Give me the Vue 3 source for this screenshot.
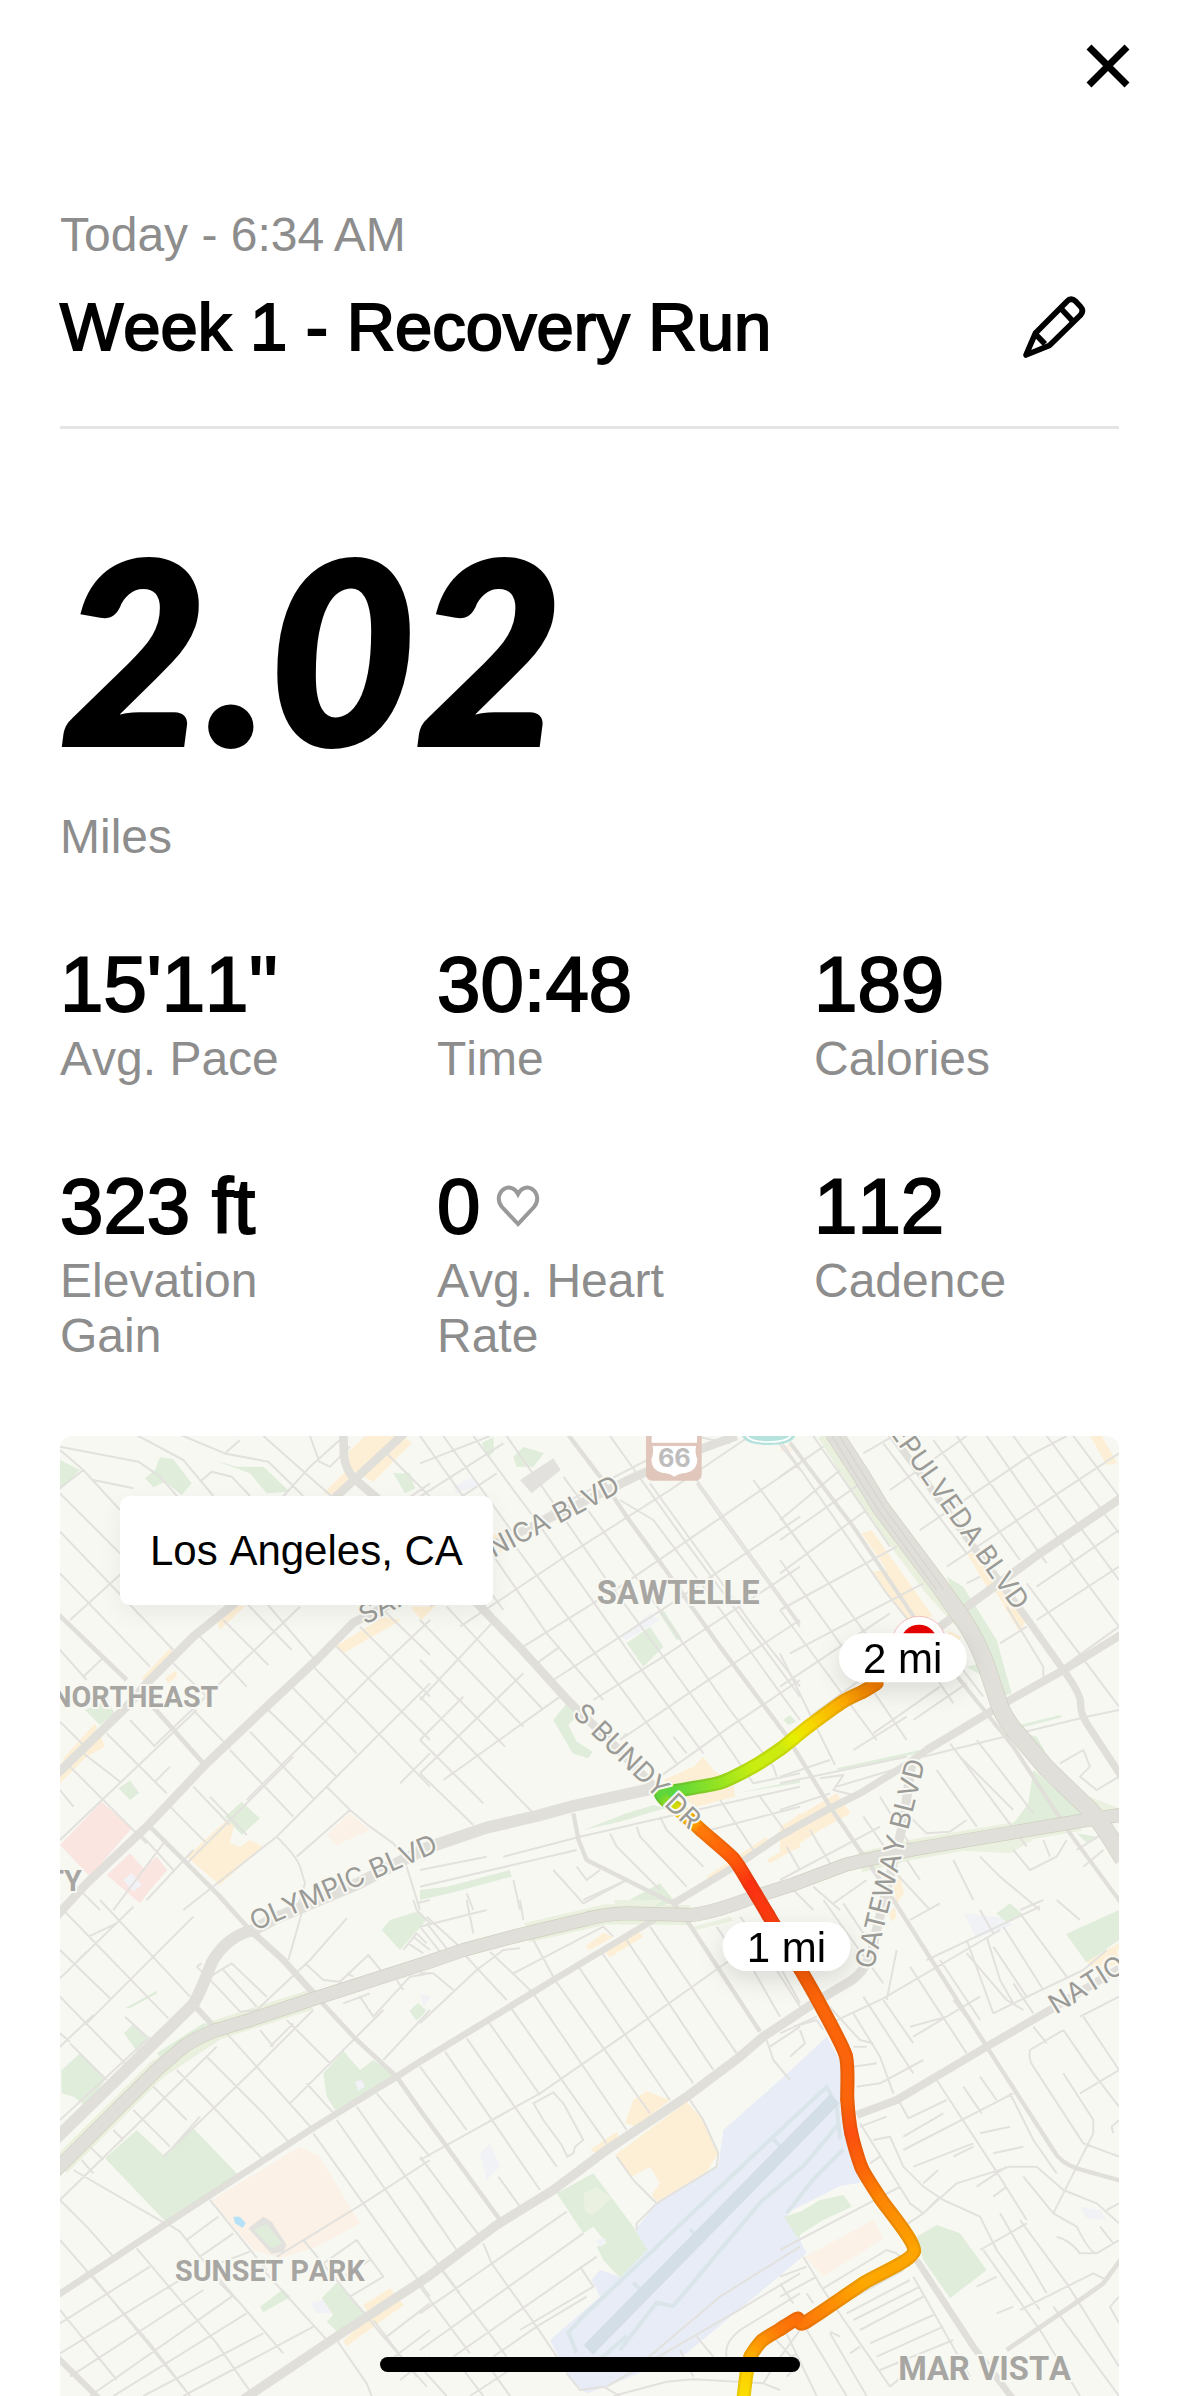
<template>
  <main class="activity">
    <header class="top-bar">
      <button class="icon-btn" type="button" aria-label="Close">
        <svg class="close-icon" viewBox="0 0 44 44">
          <path d="M3 3L41 41M41 3L3 41" />
        </svg>
      </button>
    </header>

    <section class="heading">
      <p class="label">Today - 6:34&thinsp;AM</p>
      <div class="title-row">
        <h1>Week 1 - Recovery Run</h1>
        <button class="icon-btn" type="button" aria-label="Edit title">
          <svg class="pencil-icon" viewBox="0 0 186 186">
            <path d="M9 177L37 112L131 17Q144 3 158 16L172 31Q184 44 172 58L80 148Z" />
            <path d="M114 38L149 75M37 114L66 144" />
          </svg>
        </button>
      </div>
    </section>

    <section class="distance">
      <p class="distance-value">2.02</p>
      <p class="label">Miles</p>
    </section>

    <dl class="metrics">
      <div v-for="metric in metrics" :key="metric.label" class="metric">
        <dd>
          {{ metric.value }}
          <svg v-if="metric.heart" class="heart-icon" viewBox="0 0 44 42">
            <path d="M22 39L6 22C1 16 2 8 8 4C13 1 19 3 22 9C25 3 31 1 36 4C42 8 43 16 38 22Z" />
          </svg>
        </dd>
        <dt class="label">{{ metric.label }}</dt>
      </div>
    </dl>

    <section class="map">
      <!-- three map units per pixel -->
      <svg class="map-canvas" viewBox="0 0 3177 2880" role="img" aria-label="Route map">
        <defs>
          <linearGradient
            v-for="(seg, index) in segments"
            :id="'seg' + index"
            :key="index"
            gradientUnits="userSpaceOnUse"
            :x1="seg.x1"
            :y1="seg.y1"
            :x2="seg.x2"
            :y2="seg.y2"
          >
            <stop offset="0" :stop-color="seg.from" />
            <stop offset="1" :stop-color="seg.to" />
          </linearGradient>
        </defs>

        <!-- parks, schools, shops and the airport -->
        <polygon class="airport" points="2160,1932 1990,2082 1975,2192 1790,2302 1725,2382 1760,2442 1680,2522 1620,2502 1595,2532 1620,2582 1550,2642 1470,2712 1530,2832 1580,2872 1640,2852 1880,2752 2240,2452 2180,2332 2340,2250 2400,2240 2390,2092 2350,1892 2300,1802" />
        <path class="taxiway" d="M1550 2750L1525 2690 1570 2640 2140 2102 2300 1952 2330 2010 2340 2110M1680 2742L1790 2600 1840 2610 2100 2300 2230 2190 2340 2060M1720 2540L1760 2580M1890 2380L1930 2420M2140 2110L2180 2150M1620 2770L1700 2700M2180 2332L2260 2230 2350 2140" />
        <path class="runway" d="M1585 2742L2325 1988" />
        <path class="verge" d="M0 2190L290 1902 470 1782 750 1692M2300 -10L2440 212 2620 452 2710 552M2400 1280L2560 1240 3060 1155M1400 1490L1640 1435 1890 1437" />
        <g v-for="tile in tiles" :key="tile.id" :transform="`translate(${tile.x} ${tile.y})`">
          <path v-for="kind in Object.keys(tile.areas)" :key="kind" :class="kind" :d="tile.areas[kind]" />
        </g>

        <!-- side streets -->
        <g v-for="tile in tiles" :key="tile.id" :transform="`translate(${tile.x} ${tile.y})`">
          <path class="street" :d="tile.streets" />
        </g>

        <path v-for="(road, index) in roads" :key="index" class="road" :stroke-width="road.width" :d="road.d" />
        <path class="freeway-edge" stroke-width="42" :d="santaMonicaFwy" />
        <path class="freeway-edge" stroke-width="54" :d="sanDiegoFwy" />
        <path class="road" stroke-width="38" :d="santaMonicaFwy" />
        <path class="road" stroke-width="50" :d="sanDiegoFwy" />
        <path class="median" d="M2332 -10L2400 100 2470 212 2650 460M2310 -10L2390 120 2455 222 2630 462" />

        <!-- highway shields -->
        <rect x="1758" y="-30" width="167" height="164" rx="18" fill="#e1c6bb" />
        <path d="M1775 0Q1800 -4 1843 -30Q1886 -4 1911 0V20H1775Z" fill="#fff" />
        <path d="M1778 30H1908Q1904 50 1912 70Q1912 104 1880 110Q1856 112 1843 122Q1830 112 1806 110Q1774 104 1774 70Q1782 50 1778 30Z" fill="#fff" />
        <text class="shield" x="1843" y="92" text-anchor="middle">66</text>
        <path d="M2045 -10Q2045 27 2126 27Q2207 27 2207 -10Z" fill="#b5e2dc" />
        <path d="M2056 -10Q2060 18 2126 18Q2192 18 2196 -10" fill="none" stroke="#fff" stroke-width="5" />

        <!-- route, coloured by pace -->
        <circle cx="2577" cy="622" r="81" fill="#fff" stroke="#f2a5a5" stroke-width="2" />
        <circle cx="2577" cy="622" r="56" fill="#e90000" />
        <path v-for="(seg, index) in segments" :key="'o' + index" class="route-outer" :stroke="`url(#seg${index})`" :d="seg.d" />
        <path class="route-shade" :d="routePath" />
        <path v-for="(seg, index) in segments" :key="'i' + index" class="route-inner" :stroke="`url(#seg${index})`" :d="seg.d" />

        <text
          v-for="name in streetNames"
          :key="name.text"
          class="street-name"
          :text-anchor="name.anchor"
          :transform="`translate(${name.x} ${name.y}) rotate(${name.angle})`"
        >{{ name.text }}</text>
        <text
          v-for="place in places"
          :key="place.text"
          class="place"
          :class="{ large: place.large }"
          :x="place.x"
          :y="place.y"
          :text-anchor="place.anchor"
        >{{ place.text }}</text>

        <g v-for="mile in miles" :key="mile.text" class="mile">
          <rect :x="mile.x" :y="mile.y" width="383" height="147" rx="73" />
          <text :x="mile.x + 191" :y="mile.y + 119" text-anchor="middle">{{ mile.text }}</text>
        </g>
      </svg>
      <p class="location">Los Angeles, CA</p>
    </section>

    <div class="home-indicator"></div>
  </main>
</template>

<script setup>
const metrics = [
  { value: "15'11''", label: 'Avg. Pace' },
  { value: '30:48', label: 'Time' },
  { value: '189', label: 'Calories' },
  { value: '323 ft', label: 'Elevation Gain' },
  { value: '0', label: 'Avg. Heart Rate', heart: true },
  { value: '112', label: 'Cadence' }
];

const miles = [
  { text: '2 mi', x: 2337, y: 592 },
  { text: '1 mi', x: 1988, y: 1458 }
];

const streetNames = [
  { text: 'SANTA MONICA BLVD', x: 915, y: 567, angle: -27.5, anchor: 'start' },
  { text: 'OLYMPIC BLVD', x: 584, y: 1486, angle: -23.5, anchor: 'start' },
  { text: 'S BUNDY DR', x: 1535, y: 836, angle: 44.5, anchor: 'start' },
  { text: 'SEPULVEDA BLVD', x: 2865, y: 527, angle: 55, anchor: 'end' },
  { text: 'GATEWAY BLVD', x: 2440, y: 1602, angle: -76, anchor: 'start' },
  { text: 'NATIONAL BLVD', x: 2988, y: 1736, angle: -32, anchor: 'start' }
];

const places = [
  { text: 'NORTHEAST', x: 475, y: 814, anchor: 'end' },
  { text: 'CITY', x: 65, y: 1365, anchor: 'end' },
  { text: 'SUNSET PARK', x: 345, y: 2535, anchor: 'start' },
  { text: 'SAWTELLE', x: 1610, y: 504, anchor: 'start', large: true },
  { text: 'MAR VISTA', x: 2515, y: 2832, anchor: 'start', large: true }
];

// [x, y, pace colour]
const route = [
  [2450, 742, '#f57c00'],
  [2410, 766, '#f58a00'],
  [2350, 796, '#fba800'],
  [2250, 868, '#f6d800'],
  [2200, 908, '#e6ee00'],
  [2160, 940, '#cdea10'],
  [2080, 992, '#c8ee10'],
  [1980, 1040, '#98e420'],
  [1840, 1066, '#5cd63c'],
  [1804, 1076, '#5cd63c'],
  [1830, 1104, '#a8dc10'],
  [1862, 1126, '#ffd800'],
  [1925, 1184, '#ff7a08'],
  [2020, 1268, '#ff5a0a'],
  [2070, 1346, '#fb3012'],
  [2124, 1436, '#fb3a10'],
  [2222, 1602, '#fa5c08'],
  [2272, 1690, '#fb6408'],
  [2357, 1858, '#fb640a'],
  [2362, 1992, '#fb640a'],
  [2374, 2092, '#fc5010'],
  [2405, 2196, '#fc6408'],
  [2460, 2286, '#fd8404'],
  [2562, 2446, '#fda400'],
  [2410, 2542, '#fda800'],
  [2234, 2660, '#fc7808'],
  [2212, 2648, '#fc6e08'],
  [2160, 2680, '#fc7808'],
  [2106, 2714, '#fd9204'],
  [2072, 2760, '#fdac00'],
  [2060, 2810, '#fcd000'],
  [2050, 2890, '#fbe000']
];

// curve between two route points, bent towards their neighbours
function curveTo(index) {
  const a = route[index];
  const b = route[index + 1];
  const before = route[index - 1] || a;
  const after = route[index + 2] || b;
  return `C${a[0] + (b[0] - before[0]) / 9} ${a[1] + (b[1] - before[1]) / 9} ` +
    `${b[0] - (after[0] - a[0]) / 9} ${b[1] - (after[1] - a[1]) / 9} ${b[0]} ${b[1]}`;
}

const segments = route.slice(1).map((point, index) => {
  const prev = route[index];
  return {
    x1: prev[0],
    y1: prev[1],
    x2: point[0],
    y2: point[1],
    from: prev[2],
    to: point[2],
    d: `M${prev[0]} ${prev[1]}` + curveTo(index)
  };
});

const routePath = `M${route[0][0]} ${route[0][1]}` + segments.map((seg, index) => curveTo(index)).join('');

const santaMonicaFwy = 'M-20 2210L290 1902 370 1832Q410 1805 470 1782L570 1752 750 1692 1100 1580 1210 1542 1360 1502 1560 1454Q1640 1432 1700 1432L1890 1437Q1950 1434 2090 1380L2200 1345 2360 1285 2560 1240 3060 1155 3200 1134';
const sanDiegoFwy = 'M2320 -10L2400 112 2460 212 2640 452 2710 552Q2750 610 2780 692L2820 812Q2840 860 2880 902L2960 997 3090 1122Q3130 1165 3190 1270';

const roads = [
  { width: 26, d: 'M-10 1440L80 1342 260 1172 440 982 620 812 770 672 880 560 1000 500 1280 335 1410 275 1730 120 1920 40 2030 0' },
  { width: 26, d: 'M-10 1015L200 812 260 742 400 602 520 505 830 180 890 125 1040 -15' },
  { width: 26, d: 'M850 -10L852 60Q858 105 885 130L955 190 1240 490 1380 635 1530 800 1640 905 1800 1070 1930 1190' },
  { width: 36, d: 'M-20 2115L150 1950 400 1705Q425 1660 455 1580 500 1500 580 1482L640 1450 900 1340 1100 1236 1280 1175 1430 1140 1540 1110 1790 1055' },
  { width: 22, d: 'M2490 -10L2740 332 2890 532 3010 702Q3060 770 3062 800 3060 830 3080 862L3190 1030' },
  { width: 26, d: 'M2640 572L2710 520 2940 352 3190 182' },
  { width: 24, d: 'M3190 592L3020 697 2850 792 2800 822 2600 942' },
  { width: 22, d: 'M2600 942L2530 992 2400 1072 2300 1122 2160 1200 2040 1282 1840 1402' },
  { width: 20, d: 'M1800 1440L1480 1632 1080 1877 1010 1922 750 2082 320 2362 -10 2580' },
  { width: 28, d: 'M550 2890L830 2702 1100 2525 1310 2367 1480 2262 1640 2142 1880 1982 2040 1862 2110 1802 2260 1702 2360 1642Q2430 1605 2445 1500L2530 1160 2555 980' },
  { width: 24, d: 'M2390 2037L2510 1992 2780 1832 2970 1722 3190 1590' },
  { width: 14, d: 'M-10 530L200 732M270 802L430 982M270 1172L480 1382 570 1482' },
  { width: 20, d: 'M570 1482L670 1572 760 1672' },
  { width: 14, d: 'M760 1672L880 1802 1010 1922 1080 2022 1320 2352' },
  { width: 13, d: 'M1520 -10L1620 122 1700 242 1810 392 1980 632 2180 900 2310 1112 2480 1360 2780 1832 2980 2142Q3000 2180 3050 2197L3190 2236' },
  { width: 12, d: 'M2190 20L2380 272 2580 570 2700 732 2860 932 3030 1192 3190 1410' },
  { width: 13, d: 'M1540 1132L1555 1210 1580 1272 1840 1402 1880 1452 2100 1787' },
  { width: 20, d: 'M2570 2472L2740 2732 2860 2890' },
  { width: 14, d: 'M3190 2460L3130 2542 3060 2592 2840 2742' },
  { width: 18, d: 'M-10 2762L120 2890M400 1705L460 1770' }
];

// streets and land use, one entry per map tile
const tiles = [
  {
    id: 'nw', x: -30, y: -48,
    areas: {
      green: 'M30 120L90 150 30 210ZM285 175L315 150 330 112 370 118 425 190 395 225 345 185 310 202ZM490 120L560 140 640 140 720 215 650 220 600 160ZM1030 160L1080 160 1095 205 1065 220ZM105 870L170 840 195 880 150 915ZM205 1105L240 1082 268 1118 240 1140ZM525 1190L575 1145 630 1195 575 1245Z',
      shops: 'M820 220L900 140 895 95 945 48 1060 48 1085 70 970 185 940 170 865 225ZM275 775L360 685 372 700 300 790ZM345 775L380 750 380 770 355 790ZM495 590L545 555 585 558 510 630ZM855 680L1000 590 1055 600 880 700ZM1080 560L1140 560 1110 595ZM40 1015L135 910 165 980 110 1010 30 1090 30 1060ZM410 1310L530 1200 552 1218 540 1270 570 1280 600 1260 638 1280 510 1395 480 1370Z',
      hospital: 'M30 1275L155 1145 245 1225 120 1370ZM170 1365L240 1300 280 1345 320 1310 352 1350 300 1410 270 1450Z',
      school: 'M830 1245L900 1180 960 1230 860 1275Z',
      block: 'M220 1380L245 1360 275 1395 250 1415Z'
    },
    streets: 'M30 80L265 125 330 170 470 330M130 180L250 205M30 205L100 150 30 90M100 150L210 270M250 40L400 120 490 228M380 40L525 100 570 60M520 100L655 125 760 228M450 185L485 155 545 170 600 228M640 48L880 260M780 48L808 125 840 140 900 80M30 335L370 690M30 220L210 400M30 460L300 740M30 690L110 780M60 600L215 460M100 770L155 718M1000 90L1140 230M690 240L780 140 880 50M920 340L1140 190M450 650L590 800M520 600L655 735M590 550L725 690M650 550L795 720M430 870L540 985M370 730L485 845M310 980L750 560M540 990L730 1190M600 935L790 1135M655 870L860 1070M725 800L920 1000M790 740L1140 1100M860 680L1140 960M930 620L1140 830M1000 570L1140 705M410 1330L730 1010M590 1140L960 770 1140 600M680 1250L1140 790M740 1310L900 1170M1050 1090L1140 1000M170 940L350 1120M100 1000L210 1085M60 1040L290 1270M240 900L315 980M30 1260L440 870M315 1085L360 1040M360 1160L470 1270M430 1100L540 1215M270 1240L370 1350M30 1110L70 1160M190 1470L340 1270M290 1440L430 1290M400 1470L680 1250M480 1130L590 1245M680 1250Q740 1310 750 1340L765 1390 740 1470M830 1100L900 1170 960 1220 1030 1270 1060 1310M30 905L100 975M100 1420L150 1470M1070 1340L1110 1470M1100 1450L1140 1440'
  },
  {
    id: 'n', x: 1080, y: -48,
    areas: {
      green: 'M280 110L310 80 372 100 340 140 290 140ZM185 70L220 50 222 95 205 110ZM620 670L690 620 730 680 670 740ZM715 575L730 570 785 655 770 660ZM400 900L440 850 480 880 445 915 470 965 518 995 505 1015 458 1000ZM1090 900L1110 885 1128 905 1105 915ZM490 1230L620 1180 700 1155 735 1165 600 1205ZM0 1410L80 1400 270 1350 275 1370 90 1420 0 1440ZM590 1460L720 1390 765 1445 700 1465ZM950 1120L1140 1080 1140 1088Z',
      grey: 'M300 180L400 115 422 150 335 220Z',
      shops: 'M215 350L260 320 270 365 240 400ZM0 560L45 560 0 605ZM730 1080L820 1040 850 1010 880 1050 940 1090 945 1130 830 1160 760 1120ZM858 1370L1040 1250 1045 1270 870 1380ZM1040 1320L1140 1260 1140 1280 1050 1330ZM1080 1230L1140 1180 1140 1200Z',
      school: 'M1080 90L1110 80 1120 95Z',
      block: 'M600 650L690 580 720 600 620 660ZM100 200L160 170 180 195 110 220Z'
    },
    streets: 'M0 230L250 70M110 240L230 160M0 130L210 48M180 400L470 230 820 48M120 620L420 420 750 210 990 48M310 680L600 500 1140 130M350 730L420 680M400 780L740 560 1140 290M520 840L730 710 1140 440M600 960L850 790 1140 600M720 1070L930 920 1140 780M30 560L110 520M200 500L250 570M215 400L380 640 550 840M250 330L420 560 600 800 770 1030M0 48L130 230M70 48L280 340M160 48L340 290 650 730 850 1000M260 48L380 220 560 480 730 710 890 930 1000 1090M430 170L540 320 740 600 930 870 1060 1040 1070 1070M600 240L700 300 880 540 1060 790 1140 900M570 48L800 370 1140 830M690 190L1000 620 1140 800M740 48L830 180 1140 610M820 48L930 70M830 190L900 290 1140 620M1000 180L1140 370M1060 48L1140 150M0 600L310 920M0 720L255 980M0 830L350 1190M0 960L190 1150M0 1060L160 1215M80 560L370 870M0 840L215 610M0 1060L310 760M70 1080L420 830M0 960L130 830M250 1310L480 1250 740 1190M0 1400L470 1290M0 1350L200 1310M140 1420L160 1470M280 1380L300 1470M400 1350L490 1450M470 1340L500 1380 540 1350M570 1240L590 1280 720 1410M650 1220L660 1250 800 1400M720 1190L740 1230 850 1340M1000 1090L1140 1060M740 1190L1140 1100M900 1140L1000 1290M1020 1130L1100 1240M870 1230L1140 1160M490 1450L620 1380M760 950L800 1000M600 960L620 940'
  },
  {
    id: 'ne', x: 2160, y: -48,
    areas: {
      green: 'M500 470L550 500 650 660 695 820 660 830 600 700ZM560 740L620 725 645 790ZM760 1050L830 1110 910 1185 690 1225 745 1150ZM720 935L770 950 795 995 760 980ZM170 1045L420 990 420 998 180 1052ZM720 915L840 885 845 892 730 922ZM890 1240L950 1250 920 1268Z',
      pale: 'M500 1290L680 1210 760 1260 690 1300ZM930 1130L1017 1165 1017 1180 930 1180Z',
      shops: 'M245 340L275 330 460 590 380 600 270 455 320 450ZM560 400L600 400 740 600 720 640 650 520 620 500ZM930 48L965 48 1012 130 980 135ZM0 1220L170 1120 212 1180 120 1230 0 1310ZM340 1400L360 1365 372 1420 350 1450ZM500 630L545 650 520 680Z',
      school: 'M0 80L30 75 30 90 0 96Z'
    },
    streets: 'M0 170L130 80M0 300L180 150M0 360L270 170M0 460L260 270M0 570L350 380M30 700L430 490M0 800L330 580M90 890L240 780M220 990L380 890M280 940L480 800M400 900L560 790M250 100L340 48M330 210L560 48M420 330L760 100 860 48M500 440L1017 100M560 490L600 470M770 500L1017 330M660 670L740 620M770 600L1017 440M850 740L1017 620M0 60L320 520 400 620M0 290L300 700M0 420L230 740 380 960M0 570L290 960M0 700L165 1035M100 48L330 380M380 640L520 850M450 620L610 830M310 70L560 400M460 60L720 420M530 48L800 430M620 48L880 420M700 48L980 430 1017 480M800 48L1017 340M880 48L1017 230M740 490L1017 860M870 420L1017 620M680 560L790 740 790 770M430 1010L920 890 1017 870M0 1090L380 1010M0 1070L150 1020M170 1100L370 1040M120 1075L190 1065 160 1110 240 1130M510 970L740 1280M590 960L760 1180M470 1050L590 1220M540 1010L700 1170M360 1160L440 1240 510 1235 560 1200M0 1170L150 1120M0 1380L300 1220M20 1280L60 1350M90 1230L150 1330M250 1190L320 1290M300 1130L400 1290M840 1030L910 990 930 1040 900 1070 950 1110 1017 1070M700 1290L750 1350 830 1310M790 1260L810 1310M860 1260L830 1310M600 1310L660 1370 780 1470M520 1320L580 1440M330 1340L450 1470M380 1320L420 1380M890 1290L970 1240M910 1340L970 1290M30 1400L100 1470M100 1400L180 1470M160 1450L260 1380M720 1470L790 1440'
  },
  {
    id: 'sw', x: -30, y: 1392,
    areas: {
      green: 'M165 775L260 690 340 765 430 685 565 825 350 968ZM35 510L90 460 165 540 110 620 70 590 35 580ZM222 400L250 372 295 410 262 455ZM225 325L320 272 322 280 240 325ZM995 90L1020 60 1100 35 1130 60 1050 150ZM1078 332L1105 308 1127 335 1100 362ZM820 520L880 453 930 510 970 480 1032 525 860 637 830 590ZM815 1195L860 1148 950 1240 870 1303 830 1265 850 1245ZM630 1220L700 1168 722 1190 640 1237ZM320 460L460 370 500 375 340 480Z',
      school: 'M485 900L750 740 810 770 930 970 800 1040 690 1075 610 1050Z',
      shops: 'M940 1215L1020 1165 1062 1215 890 1338 880 1322 960 1250Z',
      grey: 'M595 985L640 950 665 965 710 1035 700 1055 665 1062Z',
      field: 'M612 990L650 972 695 1030 665 1045Z',
      pool: 'M550 950L570 950 587 970 578 984 555 970Z',
      block: 'M915 545L935 540 945 560 925 572ZM780 1210L820 1200 845 1240 800 1240Z'
    },
    streets: 'M40 30L355 355M30 150L180 295M150 0L420 290M30 235L250 20M75 190L110 155M115 110L200 70M110 370L430 50M30 440L130 345M30 290L240 505M225 350L290 410M60 430L170 540M30 400L60 425M30 660L300 410M440 200L500 260 570 335M440 200L455 190M480 230L545 190 650 290M520 210L620 320M570 335L620 330 780 180 890 55M715 180L755 40M765 190L820 240 870 245 955 165 1000 220M890 220L910 230M1060 150L1100 100 1130 130M1075 130L1120 160M1090 110L1140 150M250 630L360 740M310 560L410 660M380 510L470 600 640 780M470 470L640 640 720 730M530 400L620 500 790 690M710 360L840 490M630 390L670 440M30 900L500 440M340 770L620 500 790 330M370 740L450 650M720 610L1000 330M1000 480L1140 330M660 440L730 370M880 310L960 280M930 290L970 350 1080 230 1140 220M1040 240L1060 270M70 810L345 970M95 780L130 820M30 900L110 980 190 1070M190 690L220 720M120 740L160 780M30 1020L300 1330 420 1488M130 1130L420 1488M260 1045L500 1330 610 1488M350 970L390 995 450 1070 700 1360M500 1140L560 1200M640 1110L840 1330M30 1230L200 1440M760 1020L1000 1310 1130 1460M860 1320L950 1450 965 1488M480 900L650 1110M410 1020L505 950M450 1070L550 1000M480 1100L600 1055M30 1270L300 1100M30 1360L390 1140M60 1430L460 1170M120 1488L545 1190M190 1488L590 1240M280 1488L640 1300M400 1488L790 1280M680 1070L940 910 1140 780M790 700L940 910 1140 1190M860 660L1140 1060M920 620L1060 820 1140 930M980 580L1140 770M820 1090L920 1020 1000 1130 900 1190M880 1130L960 1080M770 550L860 650M1010 1310L1140 1210M1020 1380L1140 1290M1050 1440L1140 1370M970 1260L1100 1430M1090 0L1100 30 1140 70'
  },
  {
    id: 's', x: 1080, y: 1392,
    areas: {
      shops: 'M585 765L800 605 850 660 895 760 860 815 710 905 695 885 720 850 690 800 635 830ZM615 670L640 600 680 573 750 600 650 680ZM510 750L590 695 602 720 530 760ZM495 140L550 98 580 110 510 150ZM550 150L655 95 670 110 570 172Z',
      green: 'M410 880L520 820 580 900 640 980 682 1050 600 1133 550 1080 530 1040 560 1030 520 980 490 1000ZM1092 950L1140 935 1140 1020ZM0 315L18 330 0 350Z',
      pale: 'M490 880L530 860 575 895 520 945 495 935ZM580 0L730 0 700 20 590 20ZM820 80L930 50 940 62 830 90Z',
      block: 'M180 760L210 730 240 800 200 840ZM0 280L35 290 10 320ZM525 1020L560 1015 545 1040Z'
    },
    streets: 'M0 500L140 690M75 455L360 870M140 415L410 800M205 365L360 585M270 320L560 730M340 280L620 690M405 240L690 640M475 200L750 600M540 150L820 550M620 120L880 510M690 80L950 460M0 780L360 580 620 400 930 180M340 610L400 577 430 610 490 720 465 740 460 760 442 770 425 735 370 660ZM235 830L300 920M0 890L110 1050M0 770L180 1010M0 370L170 210 250 150 300 145M130 160L260 300M210 155L340 280M280 220L550 80 580 110M340 120L400 230M0 220L40 220 100 270M0 80L200 30M20 50L130 150M0 80L60 155M20 70L80 145M140 0L160 100M300 0L310 60M190 1030L215 1090 350 1280 430 1400M0 1240L440 935M0 1350L490 1000M100 1370L530 1070M480 1100L520 1160 300 1290M50 1090L260 1370M0 1160L150 1360M350 1280L500 1190M0 1020L120 1180M220 1370L350 1280M440 1420L480 1470 550 1460 600 1488M560 1460L940 1240 1140 1120M640 1410L900 1190 1140 1040M780 1350L820 1430M830 1310L880 1370M920 1370Q910 1330 960 1290L1140 1180M580 1488L740 1445 820 1438 1030 1450 1080 1470M1080 1150L1120 1210M1030 1450L1060 1400 1140 1290M1060 1310L1140 1400M1040 420L1060 480 1110 540M1050 440L1140 380M890 80L930 140M960 50L1000 100M1000 210L1080 350M1070 210L1140 320M590 770L640 840 710 910 650 970 650 990M810 600L850 660 895 760 890 800 710 910M490 0L620 -60M0 1400L80 1488M100 1370L190 1488M200 1390L270 1488M150 1488L300 1390'
  },
  {
    id: 'se', x: 2160, y: 1392,
    areas: {
      green: 'M20 960L120 900 190 885 215 920 130 960 50 1010ZM410 1010L470 975 540 1000 620 1110 510 1195 430 1080ZM650 40L690 10 730 45 680 70ZM858 102L1017 30 1017 120 920 188Z',
      school: 'M75 1070L280 960 310 1015 130 1130Z',
      shops: 'M920 185L1017 130 1017 190 950 212ZM325 40L345 20 350 50 335 65Z',
      block: 'M550 40L650 50 700 75 590 115ZM900 920L960 930 980 960 920 955Z'
    },
    streets: 'M0 110L40 70M0 200L60 310M130 0L310 250M190 10L290 160M390 60L480 10M440 180L780 20M320 300L350 150M40 380L110 360 130 390M150 370L310 295 660 90M400 410L600 290M250 290L400 520M310 300L400 430M130 300L240 420 280 430M220 340L300 470 340 580M220 440L260 440M220 500L290 490M230 560L300 550 430 480M480 180L600 360M390 200L560 460M390 380L500 350M560 120L640 340M620 110L660 240 700 310M560 160L680 300 730 330M670 80L790 270M720 40L860 230M600 30L640 100M640 340L700 310 910 210 980 150M830 0L900 60M900 350L1017 290M910 350L1017 510M900 580L1017 510M850 390L940 520 1017 620M850 390L750 450Q745 480 760 500L910 730 1017 770M850 520L940 660 940 700 820 940M760 380L800 430M700 250L760 340M355 600L385 655 500 600M470 540L640 800 740 960M550 560L605 640M600 530L650 600M370 750L700 580M370 710L490 640M400 800L580 730M430 850L475 810M240 680L320 650M280 720L330 710 370 800 430 860 490 900 600 950 650 1050 780 1230M240 670L390 910 430 940M430 940L530 850 690 800 770 800M270 790L300 770M0 1050L360 860M370 980L430 940 480 890M600 700L690 680M520 770L580 740M640 760L730 740M590 860L680 800M640 890L680 860M730 830L820 940 890 980Q930 1060 950 1060L1017 1020M770 800L850 870 950 910 1017 970M690 580L760 720 830 820M830 1010Q870 1020 900 1060L950 1060M960 980L1000 1030M980 930L1017 910M660 940L800 1180M600 1050L740 970M720 960L860 1150 1017 1400M610 1050L780 1290 900 1488M590 1160L650 1130M720 1230L940 1120 980 1140M650 1240L700 1220M820 1220L1017 1488M1017 1190L990 1220 1017 1270M1000 700L995 680 1017 660M130 1165L320 1050 350 1060 390 1100M70 1070L130 1170 330 1460M0 1130L80 1100M0 1190L110 1130M80 1180L100 1210M170 1220L370 1110M200 1240L390 1140M220 1260L420 1160M240 1290L430 1190M270 1330L460 1245M290 1370L490 1280M300 1410L520 1320M210 1360L240 1340M0 1260L110 1488M80 1290L200 1488M150 1300L260 1488M180 1310L150 1295M400 1130L570 1430M330 1460L400 1400M0 1390L50 1360M20 1430L50 1400M520 300L620 430M30 470L75 430 60 390M0 400L110 350M640 140L740 290'
  }
];
</script>

<style>
body {
  margin: 0;
  background: #fff;
}
</style>

<style scoped>
.activity {
  padding: 0 60px;
  overflow: hidden;
  color: #000;
  font-family: "Liberation Sans", Arial, sans-serif;
  font-kerning: none;
}

p,
h1,
dl,
dd {
  margin: 0;
}

.icon-btn {
  display: flex;
  align-items: center;
  justify-content: center;
  width: 64px;
  height: 64px;
  padding: 0;
  border: none;
  background: none;
  cursor: pointer;
}

.top-bar {
  display: flex;
  align-items: center;
  justify-content: flex-end;
  height: 132px;
  margin-right: -21px;
}

.close-icon {
  width: 44px;
  height: 44px;
  fill: none;
  stroke: #000;
  stroke-width: 7;
}

.label {
  color: #8d8d8d;
  font-size: 48px;
  line-height: 55px;
}

.heading {
  padding: 75px 0 59px;
  border-bottom: 3px solid #e5e5e5;
}

.heading .label {
  font-kerning: normal;
}

.title-row {
  display: flex;
  align-items: center;
  justify-content: space-between;
  margin-top: 25px;
  padding-right: 33px;
}

h1 {
  font-size: 67px;
  font-weight: 400;
  line-height: 80px;
  -webkit-text-stroke: 2px #000;
}

.pencil-icon {
  width: 62px;
  height: 62px;
  overflow: visible;
  fill: none;
  stroke: #000;
  stroke-width: 17;
  stroke-linejoin: round;
}

.distance {
  padding-top: 90px;
}

.distance-value {
  margin-bottom: 34px;
  font-family: Lato, "Liberation Sans", sans-serif;
  font-size: 254px;
  font-style: italic;
  font-weight: 900;
  line-height: 256px;
  -webkit-text-stroke: 4px #000;
}

.metrics {
  display: grid;
  grid-template-columns: repeat(3, 1fr);
  gap: 73px 72px;
  margin-top: 73px;
}

.metric {
  display: flex;
  flex-direction: column;
}

.metric dd {
  display: flex;
  align-items: center;
  gap: 16px;
  font-size: 78px;
  line-height: 94px;
  -webkit-text-stroke: 2px #000;
}

.heart-icon {
  width: 44px;
  height: 42px;
  fill: none;
  stroke: #999;
  stroke-width: 4;
}

.map {
  position: relative;
  margin-top: 73px;
  overflow: hidden;
  border-radius: 12px 12px 0 0;
  background: #f8f8f3;
}

.map-canvas {
  display: block;
  width: 100%;
}

.street,
.road,
.taxiway,
.runway,
.verge,
.freeway-edge,
.median {
  fill: none;
  stroke-linejoin: round;
}

.street {
  stroke: #e2e1dd;
  stroke-width: 6;
}

.road {
  stroke: #e0dfda;
}

.freeway-edge {
  stroke: #d0cfbf;
}

.median {
  stroke: #d2d1ca;
  stroke-width: 3;
}

.verge {
  stroke: #eaf0de;
  stroke-width: 60;
}

.airport {
  fill: #e8ecf6;
}

.runway {
  stroke: #d3dee6;
  stroke-width: 40;
}

.taxiway {
  stroke: #dae5ea;
  stroke-width: 12;
}

.green,
.field {
  fill: #dfedda;
}

.pale {
  fill: #eaf1e0;
}

.shops {
  fill: #fdefd5;
}

.school {
  fill: #fbf1e6;
}

.hospital {
  fill: #fae5e1;
}

.grey {
  fill: #e2e1de;
}

.pool {
  fill: #b6e2f8;
}

.block {
  fill: #f1f2f6;
}

.shield {
  fill: #bdbdbd;
  font-family: Inter, sans-serif;
  font-size: 76px;
  font-weight: 700;
}

.route-outer,
.route-shade,
.route-inner {
  fill: none;
  stroke-linecap: round;
  stroke-linejoin: round;
}

.route-outer {
  stroke-width: 42;
}

.route-shade {
  stroke: rgba(110, 70, 0, 0.12);
  stroke-width: 42;
}

.route-inner {
  stroke-width: 28;
}

.street-name,
.place {
  stroke: #f8f8f3;
  stroke-width: 12;
  stroke-linejoin: round;
  paint-order: stroke;
}

.street-name {
  fill: #9a9a96;
  font-family: Inter, sans-serif;
  font-size: 81px;
}

.place {
  fill: #a7a6a2;
  font-family: Roboto, "Liberation Sans", sans-serif;
  font-size: 86px;
  font-weight: 700;
}

.place.large {
  font-size: 98px;
}

.mile {
  filter: drop-shadow(0 24px 36px rgba(0, 0, 0, 0.12));
}

.mile rect {
  fill: #fff;
}

.mile text {
  font-size: 126px;
}

.location {
  position: absolute;
  top: 60px;
  left: 60px;
  padding: 30px;
  border-radius: 10px;
  background: #fff;
  box-shadow: 0 8px 24px rgba(0, 0, 0, 0.06);
  font-size: 42px;
  line-height: 49px;
}

.home-indicator {
  position: fixed;
  bottom: 24px;
  left: 50%;
  width: 420px;
  height: 15px;
  border-radius: 8px;
  background: #000;
  transform: translateX(-50%);
}
</style>
